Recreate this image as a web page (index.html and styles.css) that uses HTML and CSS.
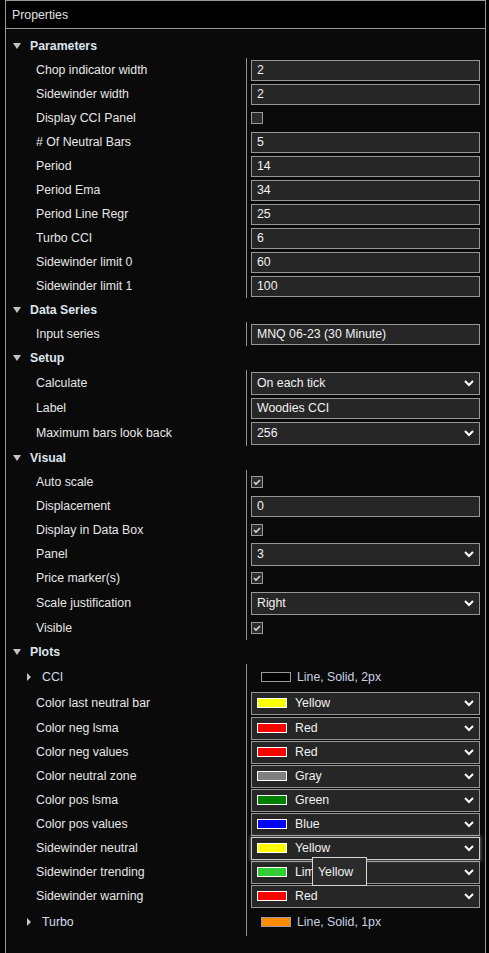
FILE: index.html
```html
<!DOCTYPE html>
<html lang="en">
<head>
  <meta charset="UTF-8">
  <title>Properties</title>
  <link rel="stylesheet" href="styles.css">
</head>
<body>

<div class="panel">
  <div class="title">Properties</div>

  <div class="props">

    <div class="cat"><span class="tri-down"></span>Parameters</div>
    <div class="rows">
      <div class="row"><div class="lbl">Chop indicator width</div><div class="val"><div class="box">2</div></div></div>
      <div class="row"><div class="lbl">Sidewinder width</div><div class="val"><div class="box">2</div></div></div>
      <div class="row"><div class="lbl">Display CCI Panel</div><div class="val"><span class="check"></span></div></div>
      <div class="row"><div class="lbl"># Of Neutral Bars</div><div class="val"><div class="box">5</div></div></div>
      <div class="row"><div class="lbl">Period</div><div class="val"><div class="box">14</div></div></div>
      <div class="row"><div class="lbl">Period Ema</div><div class="val"><div class="box">34</div></div></div>
      <div class="row"><div class="lbl">Period Line Regr</div><div class="val"><div class="box">25</div></div></div>
      <div class="row"><div class="lbl">Turbo CCI</div><div class="val"><div class="box">6</div></div></div>
      <div class="row"><div class="lbl">Sidewinder limit 0</div><div class="val"><div class="box">60</div></div></div>
      <div class="row"><div class="lbl">Sidewinder limit 1</div><div class="val"><div class="box">100</div></div></div>
    </div>

    <div class="cat"><span class="tri-down"></span>Data Series</div>
    <div class="rows">
      <div class="row"><div class="lbl">Input series</div><div class="val"><div class="box">MNQ 06-23 (30 Minute)</div></div></div>
    </div>

    <div class="cat"><span class="tri-down"></span>Setup</div>
    <div class="rows">
      <div class="row tall"><div class="lbl">Calculate</div><div class="val"><div class="box select">On each tick<svg class="chev" width="10" height="7" viewBox="0 0 10 7"><polyline points="1,1 5,5 9,1"/></svg></div></div></div>
      <div class="row"><div class="lbl">Label</div><div class="val"><div class="box">Woodies CCI</div></div></div>
      <div class="row tall"><div class="lbl">Maximum bars look back</div><div class="val"><div class="box select">256<svg class="chev" width="10" height="7" viewBox="0 0 10 7"><polyline points="1,1 5,5 9,1"/></svg></div></div></div>
    </div>

    <div class="cat"><span class="tri-down"></span>Visual</div>
    <div class="rows">
      <div class="row"><div class="lbl">Auto scale</div><div class="val"><span class="check on"><svg width="10" height="10" viewBox="0 0 10 10"><polyline points="2,5 4,7 8,3"/></svg></span></div></div>
      <div class="row"><div class="lbl">Displacement</div><div class="val"><div class="box">0</div></div></div>
      <div class="row"><div class="lbl">Display in Data Box</div><div class="val"><span class="check on"><svg width="10" height="10" viewBox="0 0 10 10"><polyline points="2,5 4,7 8,3"/></svg></span></div></div>
      <div class="row"><div class="lbl">Panel</div><div class="val"><div class="box select">3<svg class="chev" width="10" height="7" viewBox="0 0 10 7"><polyline points="1,1 5,5 9,1"/></svg></div></div></div>
      <div class="row"><div class="lbl">Price marker(s)</div><div class="val"><span class="check on"><svg width="10" height="10" viewBox="0 0 10 10"><polyline points="2,5 4,7 8,3"/></svg></span></div></div>
      <div class="row tall"><div class="lbl">Scale justification</div><div class="val"><div class="box select">Right<svg class="chev" width="10" height="7" viewBox="0 0 10 7"><polyline points="1,1 5,5 9,1"/></svg></div></div></div>
      <div class="row"><div class="lbl">Visible</div><div class="val"><span class="check on"><svg width="10" height="10" viewBox="0 0 10 10"><polyline points="2,5 4,7 8,3"/></svg></span></div></div>
    </div>

    <div class="cat"><span class="tri-down"></span>Plots</div>
    <div class="rows">
      <div class="row tall"><div class="lbl sub"><span class="tri-right"></span>CCI</div><div class="val"><span class="plot-swatch" style="background:#000"></span><span class="plot-text">Line, Solid, 2px</span></div></div>
      <div class="row tall"><div class="lbl">Color last neutral bar</div><div class="val"><div class="box select"><span class="swatch" style="background:#ffff00"></span>Yellow<svg class="chev" width="10" height="7" viewBox="0 0 10 7"><polyline points="1,1 5,5 9,1"/></svg></div></div></div>
      <div class="row"><div class="lbl">Color neg lsma</div><div class="val"><div class="box select"><span class="swatch" style="background:#ff0000"></span>Red<svg class="chev" width="10" height="7" viewBox="0 0 10 7"><polyline points="1,1 5,5 9,1"/></svg></div></div></div>
      <div class="row"><div class="lbl">Color neg values</div><div class="val"><div class="box select"><span class="swatch" style="background:#ff0000"></span>Red<svg class="chev" width="10" height="7" viewBox="0 0 10 7"><polyline points="1,1 5,5 9,1"/></svg></div></div></div>
      <div class="row"><div class="lbl">Color neutral zone</div><div class="val"><div class="box select"><span class="swatch" style="background:#808080"></span>Gray<svg class="chev" width="10" height="7" viewBox="0 0 10 7"><polyline points="1,1 5,5 9,1"/></svg></div></div></div>
      <div class="row"><div class="lbl">Color pos lsma</div><div class="val"><div class="box select"><span class="swatch" style="background:#008000"></span>Green<svg class="chev" width="10" height="7" viewBox="0 0 10 7"><polyline points="1,1 5,5 9,1"/></svg></div></div></div>
      <div class="row"><div class="lbl">Color pos values</div><div class="val"><div class="box select"><span class="swatch" style="background:#0000ff"></span>Blue<svg class="chev" width="10" height="7" viewBox="0 0 10 7"><polyline points="1,1 5,5 9,1"/></svg></div></div></div>
      <div class="row"><div class="lbl">Sidewinder neutral</div><div class="val has-tip"><div class="box select focus"><span class="swatch" style="background:#ffff00"></span>Yellow<svg class="chev" width="10" height="7" viewBox="0 0 10 7"><polyline points="1,1 5,5 9,1"/></svg></div><div class="tooltip">Yellow</div></div></div>
      <div class="row"><div class="lbl">Sidewinder trending</div><div class="val"><div class="box select"><span class="swatch" style="background:#32cd32"></span>LimeGreen<svg class="chev" width="10" height="7" viewBox="0 0 10 7"><polyline points="1,1 5,5 9,1"/></svg></div></div></div>
      <div class="row"><div class="lbl">Sidewinder warning</div><div class="val"><div class="box select"><span class="swatch" style="background:#ff0000"></span>Red<svg class="chev" width="10" height="7" viewBox="0 0 10 7"><polyline points="1,1 5,5 9,1"/></svg></div></div></div>
      <div class="row last"><div class="lbl sub"><span class="tri-right"></span>Turbo</div><div class="val"><span class="plot-swatch" style="background:#ff8c00"></span><span class="plot-text">Line, Solid, 1px</span></div></div>
    </div>

  </div>
</div>

</body>
</html>
```

FILE: styles.css
```css
body {
  margin: 0;
  padding: 0;
  background: #000;
  font-family: "Liberation Sans", Arial, sans-serif;
  font-size: 12.3px;
  color: #e6e6e6;
  overflow: hidden;
}

.panel {
  margin-left: 5px;
  width: 481px;
  box-sizing: border-box;
  min-height: 960px;
  border: 1px solid #9a9a9a;
  border-bottom: none;
  background: #0a0a0a;
}

.title {
  height: 27px;
  line-height: 28px;
  padding-left: 6px;
  background: #000;
  border-bottom: 1px solid #9a9a9a;
  color: #e0e0e0;
}

.props {
  padding-top: 5px;
}

.cat {
  height: 24px;
  display: flex;
  align-items: center;
  padding-left: 7px;
  font-weight: bold;
  color: #dde4ee;
}

.tri-down {
  width: 0;
  height: 0;
  border-left: 4px solid transparent;
  border-right: 4px solid transparent;
  border-top: 6px solid #c4c4c4;
  margin-right: 9px;
}

.tri-right {
  width: 0;
  height: 0;
  border-top: 4px solid transparent;
  border-bottom: 4px solid transparent;
  border-left: 4px solid #c4c4c4;
  margin-right: 11px;
}

.row {
  display: grid;
  grid-template-columns: 240px 1fr;
  height: 24px;
}

.row.tall {
  height: 26px;
}

.row.last {
  height: 28px;
}

.lbl {
  display: flex;
  align-items: center;
  padding-left: 30px;
  white-space: nowrap;
}

.lbl.sub {
  padding-left: 21px;
  color: #d4dcea;
}

.val {
  display: flex;
  align-items: center;
  border-left: 1px solid #8f8f8f;
  padding: 0 5px 0 4px;
}

.has-tip {
  position: relative;
}

.box {
  flex: 1;
  height: 21px;
  box-sizing: border-box;
  display: flex;
  align-items: center;
  padding-left: 5px;
  background: #262626;
  border: 1px solid #979797;
  color: #f2f2f2;
  white-space: nowrap;
  overflow: hidden;
}

.box.select {
  height: 23px;
}

.box.focus {
  border-color: #cfcfcf;
  box-shadow: 0 0 3px 1px rgba(255, 255, 255, 0.35);
}

.chev {
  margin-left: auto;
  margin-right: 5px;
  flex-shrink: 0;
}

.chev polyline {
  fill: none;
  stroke: #fff;
  stroke-width: 2;
}

.swatch {
  width: 30px;
  height: 10px;
  box-sizing: border-box;
  border: 1px solid #fff;
  margin-right: 8px;
  flex-shrink: 0;
}

.check {
  width: 12px;
  height: 12px;
  box-sizing: border-box;
  background: #2c2c2c;
  border: 1px solid #9a9a9a;
  display: flex;
  align-items: center;
  justify-content: center;
}

.check polyline {
  fill: none;
  stroke: #d8d8d8;
  stroke-width: 1.6;
}

.plot-swatch {
  width: 30px;
  height: 10px;
  box-sizing: border-box;
  border: 1px solid #9a9a9a;
  margin-left: 10px;
  margin-right: 6px;
}

.plot-text {
  color: #c9d2e2;
}

.tooltip {
  position: absolute;
  left: 65px;
  top: 21px;
  width: 55px;
  height: 29px;
  box-sizing: border-box;
  padding-left: 5px;
  display: flex;
  align-items: center;
  background: #2b2b2b;
  border: 1px solid #d6d6d6;
  color: #f2f2f2;
  z-index: 2;
}
```
